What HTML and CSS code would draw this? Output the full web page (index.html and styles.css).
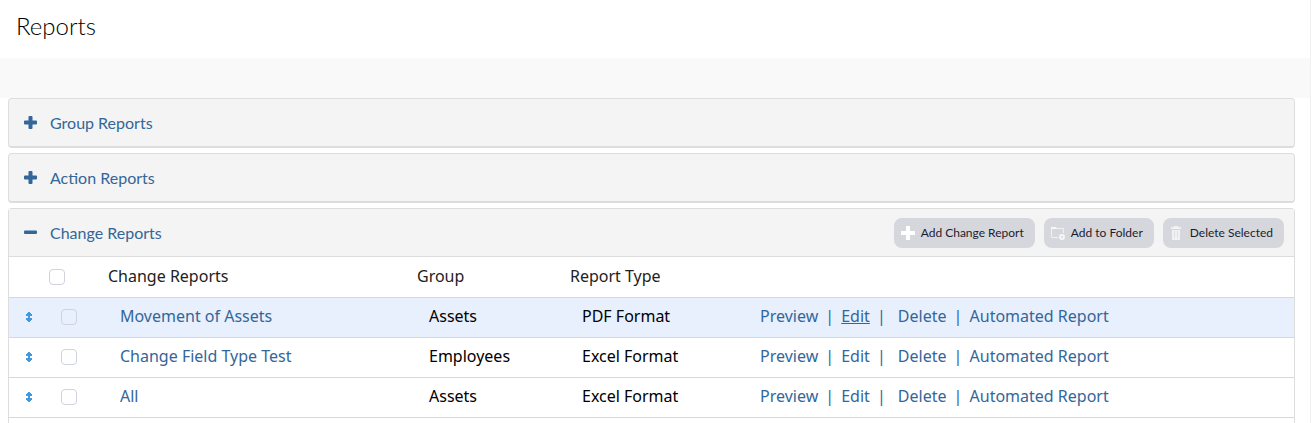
FILE: index.html
```html
<!DOCTYPE html>
<html lang="en">
<head>
    <meta charset="UTF-8">
    <meta name="viewport" content="width=device-width, initial-scale=1.0">
    <title>Reports</title>
    <link rel="stylesheet" href="styles.css">
</head>
<body>
    <!-- icons shared by the rows -->
    <svg class="sprite" aria-hidden="true">
        <symbol id="move" viewBox="0 0 6 10">
            <path d="M2 0H4V1H5V2H6V4H4V6H6V8H5V9H4V10H2V9H1V8H0V6H2V4H0V2H1V1H2Z"/>
        </symbol>
        <symbol id="plus" viewBox="0 0 13 13">
            <path d="M5.5 0H7.5Q8.5 0 8.5 1V4.5H12Q13 4.5 13 5.5V7.5Q13 8.5 12 8.5H8.5V12Q8.5 13 7.5 13H5.5Q4.5 13 4.5 12V8.5H1Q0 8.5 0 7.5V5.5Q0 4.5 1 4.5H4.5V1Q4.5 0 5.5 0Z"/>
        </symbol>
        <symbol id="minus" viewBox="0 0 13 13">
            <path d="M1 4.500H12Q13 4.500 13 5.500V7Q13 8 12 8H1Q0 8 0 7V5.500Q0 4.500 1 4.500Z"/>
        </symbol>
    </svg>

    <header class="page-header">
        <h1>Reports</h1>
    </header>
    <div class="toolbar"></div>

    <main>
        <section class="panel">
            <h2 class="panel-heading">
                <a href="#group"><svg class="toggle"><use href="#plus"/></svg>Group Reports</a>
            </h2>
        </section>
        <section class="panel">
            <h2 class="panel-heading">
                <a href="#action"><svg class="toggle"><use href="#plus"/></svg>Action Reports</a>
            </h2>
        </section>
        <section class="panel panel-open">
            <div class="panel-heading">
                <h2><a href="#change"><svg class="toggle"><use href="#minus"/></svg>Change Reports</a></h2>
                <div class="buttons">
                    <button type="button">
                        <svg viewBox="0 0 14 14"><path fill="#fff" d="M5 0H9V5H14V9H9V14H5V9H0V5H5Z"/></svg>
                        Add Change Report
                    </button>
                    <button type="button">
                        <svg viewBox="0 0 14 14">
                            <path fill="none" stroke="#f1f1f3" d="M7 11.5H.5V2.5H12.5V7"/>
                            <path fill="#f6f6f8" d="M0 1H5L6 3H0Z"/>
                            <circle cx="11" cy="11" r="2" fill="none" stroke="#f6f6f8" stroke-width="2"/>
                        </svg>
                        Add to Folder
                    </button>
                    <button type="button">
                        <svg viewBox="0 0 14 14">
                            <path fill="#f1f1f3" d="M4 0H8V1H11V3H1V1H4ZM2 4H10V14H2Z"/>
                            <path stroke="#e0e1e5" d="M4.500 5V12M7.500 5V12"/>
                        </svg>
                        Delete Selected
                    </button>
                </div>
            </div>
            <table>
                <colgroup>
                    <col class="col-move">
                    <col class="col-check">
                    <col class="col-name">
                    <col class="col-group">
                    <col class="col-type">
                    <col>
                </colgroup>
                <thead>
                    <tr>
                        <td></td>
                        <td><input type="checkbox" aria-label="Select all"></td>
                        <th>Change Reports</th>
                        <th>Group</th>
                        <th>Report Type</th>
                        <td></td>
                    </tr>
                </thead>
                <tbody>
                    <tr class="active">
                        <td class="move"><svg><use href="#move"/></svg></td>
                        <td><input type="checkbox" aria-label="Movement of Assets"></td>
                        <td><a href="#">Movement of Assets</a></td>
                        <td>Assets</td>
                        <td>PDF Format</td>
                        <td>
                            <div class="actions">
                                <a href="#">Preview</a><span>|</span><a href="#" class="current">Edit</a><span>|</span><a href="#" class="delete">Delete</a><span>|</span><a href="#">Automated Report</a>
                            </div>
                        </td>
                    </tr>
                    <tr>
                        <td class="move"><svg><use href="#move"/></svg></td>
                        <td><input type="checkbox" aria-label="Change Field Type Test"></td>
                        <td><a href="#">Change Field Type Test</a></td>
                        <td>Employees</td>
                        <td>Excel Format</td>
                        <td>
                            <div class="actions">
                                <a href="#">Preview</a><span>|</span><a href="#">Edit</a><span>|</span><a href="#" class="delete">Delete</a><span>|</span><a href="#">Automated Report</a>
                            </div>
                        </td>
                    </tr>
                    <tr>
                        <td class="move"><svg><use href="#move"/></svg></td>
                        <td><input type="checkbox" aria-label="All"></td>
                        <td><a href="#">All</a></td>
                        <td>Assets</td>
                        <td>Excel Format</td>
                        <td>
                            <div class="actions">
                                <a href="#">Preview</a><span>|</span><a href="#">Edit</a><span>|</span><a href="#" class="delete">Delete</a><span>|</span><a href="#">Automated Report</a>
                            </div>
                        </td>
                    </tr>
                </tbody>
            </table>
        </section>
    </main>
</body>
</html>
```
FILE: styles.css
```css
* {
    box-sizing: border-box;
}

body {
    margin: 0;
    min-height: 100vh;
    display: flex;
    flex-direction: column;
    border-right: 1px solid #f0f0f0;
    background: #fff;
    color: #000;
    font-family: Lato, sans-serif;
    font-size: 16px;
}

a {
    color: #336699;
    text-decoration: none;
}

h1, h2 {
    margin: 0;
    font-size: 16px;
    font-weight: 400;
}

.sprite {
    display: none;
}

.page-header {
    height: 58px;
    padding: 11px 16px;
}

.page-header h1 {
    font-size: 24px;
    font-weight: 300;
    line-height: 30px;
}

.toolbar {
    height: 40px;
    background: #f9f9f9;
}

main {
    flex: 1;
    display: flex;
    flex-direction: column;
    gap: 5px;
    padding: 0 15px 0 8px;
}

.panel {
    border: 1px solid #ddd;
    border-bottom-width: 2px;
    border-radius: 4px;
    background: #f4f4f4;
}

.panel-heading {
    display: flex;
    align-items: center;
    justify-content: space-between;
    height: 47px;
    padding: 0 10px 0 15px;
}

.panel-heading a {
    display: flex;
    align-items: center;
    gap: 13px;
}

.toggle {
    width: 13px;
    height: 13px;
    fill: #336699;
}

.panel-open {
    flex: 1;
    border-bottom: 0;
    border-radius: 4px 4px 0 0;
    background: #fff;
}

.panel-open .panel-heading {
    height: 48px;
    border-bottom: 1px solid #ddd;
    background: #f4f4f4;
}

.buttons {
    display: flex;
    gap: 9px;
}

button {
    display: flex;
    align-items: center;
    gap: 6px;
    height: 30px;
    padding: 0 11px 0 7px;
    border: 0;
    border-radius: 8px;
    background: #d6d7dc;
    color: #1c1c2e;
    font-family: Lato, sans-serif;
    font-size: 12px;
    cursor: pointer;
}

button svg {
    width: 14px;
    height: 14px;
}

table {
    width: 100%;
    border-collapse: collapse;
    table-layout: fixed;
    font-family: "Noto Sans", sans-serif;
    font-size: 16px;
    line-height: 20px;
}

.col-move {
    width: 40px;
}

.col-check {
    width: 59px;
}

.col-name {
    width: 309px;
}

.col-group {
    width: 153px;
}

.col-type {
    width: 178px;
}

th, td {
    height: 40px;
    padding: 0 0 2px;
    border-bottom: 1px solid #d8d8d8;
    text-align: left;
    font-weight: 400;
    white-space: nowrap;
}

th {
    color: #222;
}

tbody td {
    padding-left: 12px;
}

td:nth-child(-n+2) {
    padding-bottom: 0;
}

tbody .move {
    padding-left: 17px;
}

.move svg {
    display: block;
    width: 6px;
    height: 10px;
    fill: #4499dd;
}

.active {
    background: #e8f0fe;
}

input[type="checkbox"] {
    appearance: none;
    display: block;
    width: 16px;
    height: 16px;
    margin: 0;
    border: 1px solid #d1d2e0;
    border-radius: 4px;
}

.actions {
    display: flex;
    gap: 7px;
    color: #336699;
}

.actions span {
    width: 9px;
    text-align: center;
}

.actions .current {
    text-decoration: underline;
}

.actions .delete {
    margin-left: 5px;
}
```
